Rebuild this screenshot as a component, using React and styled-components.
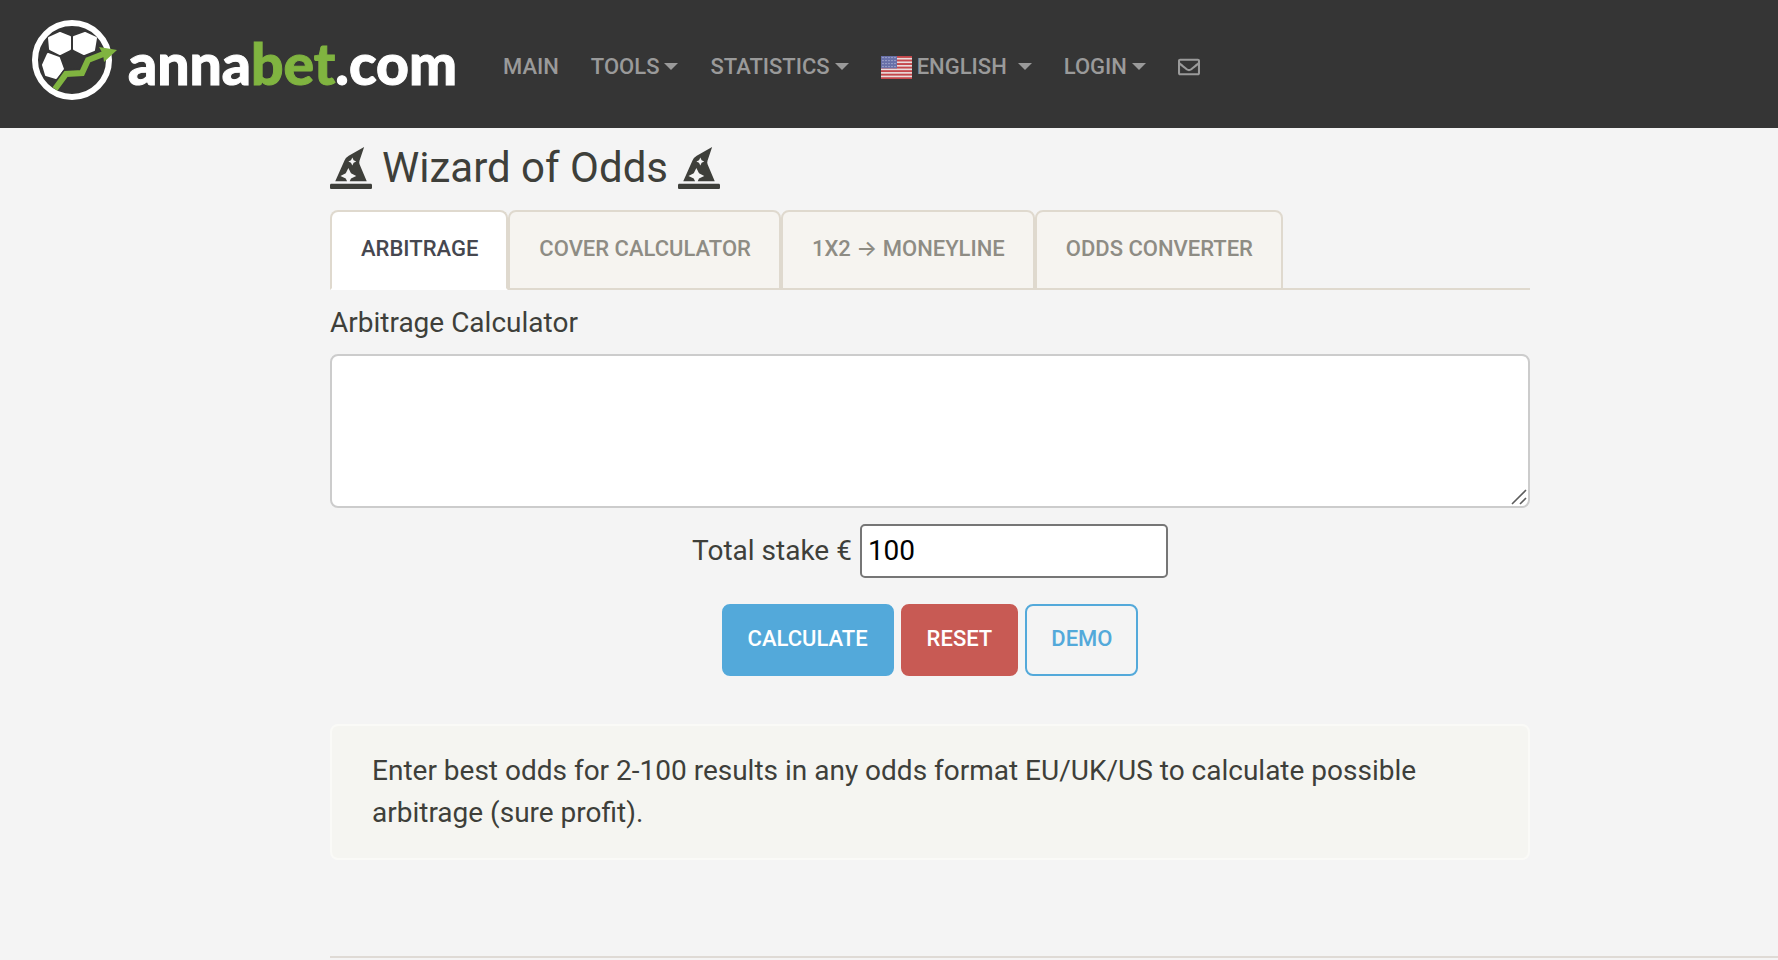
import React from 'react';
import styled, { createGlobalStyle } from 'styled-components';
import { FaHatWizard, FaRegEnvelope } from 'react-icons/fa';

const GlobalStyle = createGlobalStyle`
  * {
    box-sizing: border-box;
  }
  body {
    margin: 0;
    background: #f4f4f4;
    color: #3e3f3a;
    font-family: Roboto, Inter, sans-serif;
    font-size: 28px;
    line-height: 42px;
  }
`;

const Navbar = styled.header`
  display: flex;
  align-items: flex-start;
  gap: 46px;
  height: 128px;
  padding: 18px 32px;
  background: #353535;
`;
const Brand = styled.a`
  display: flex;
  gap: 10px;
  text-decoration: none;
`;
const BrandName = styled.span`
  padding-top: 13px;
  color: #fff;
  font-family: Lato, sans-serif;
  font-size: 57px;
  font-weight: 900;
  line-height: 64px;
  -webkit-text-stroke: 1px;
`;
const Green = styled.span`
  color: #80b440;
`;
const Nav = styled.nav`
  display: flex;
  align-items: center;
  gap: 32px;
  padding-top: 33px;
`;
const NavLink = styled.a`
  display: flex;
  align-items: center;
  gap: 5px;
  color: #9a9a9a;
  font-size: 22px;
  font-weight: 500;
  line-height: 32px;
  text-decoration: none;
  text-transform: uppercase;
`;
const Caret = styled.span`
  margin: 0 0 2px ${(props) => (props.$spaced ? "6px" : "0")};
  border-top: 7px solid;
  border-right: 7px solid transparent;
  border-left: 7px solid transparent;
`;

const Page = styled.div`
  padding: 13px 0 0 330px;
`;
const Content = styled.main`
  max-width: 1200px;
`;
const Title = styled.h1`
  display: flex;
  align-items: center;
  gap: 10px;
  margin: 0 0 15px;
  font-size: 42px;
  font-weight: 400;
  line-height: 54px;
`;
const Tabs = styled.div`
  display: flex;
  border-bottom: 2px solid #dfd9ce;
`;
const Tab = styled.button`
  height: 80px;
  margin-bottom: -2px;
  padding: 0 28px 4px 29px;
  border: 2px solid #dfd9ce;
  border-bottom-color: ${(props) => (props.$active ? "#fff" : "#dfd9ce")};
  border-radius: 8px 8px 0 0;
  background: ${(props) => (props.$active ? "#fff" : "#f6f4f0")};
  color: ${(props) => (props.$active ? "#46474f" : "#8e8c84")};
  font-family: inherit;
  font-size: 22px;
  font-weight: 500;
  text-transform: uppercase;
  cursor: pointer;
`;
const FieldLabel = styled.label`
  display: block;
  margin: 12px 0 10px;
`;
const OddsBox = styled.div`
  position: relative;
`;
const OddsInput = styled.textarea`
  display: block;
  width: 100%;
  height: 154px;
  padding: 12px 24px;
  border: 2px solid #ccc;
  border-radius: 8px;
  background: #fff;
  font: inherit;
  resize: vertical;

  &::-webkit-resizer {
    background: transparent;
  }
`;
const Grip = styled.svg`
  position: absolute;
  right: 3px;
  bottom: 3px;
  pointer-events: none;
`;
const Row = styled.div`
  display: flex;
  justify-content: center;
  align-items: center;
  gap: ${(props) => props.$gap};
  margin-top: ${(props) => props.$top};
`;
const StakeInput = styled.input`
  width: 308px;
  height: 54px;
  padding: 0 6px 2px;
  border: 2px solid #767676;
  border-radius: 5px;
  background: #fff;
  color: #000;
  font: inherit;
`;
const Button = styled.button`
  height: 72px;
  padding: 0 24px 4px;
  border: 2px solid ${(props) => props.$color};
  border-radius: 8px;
  background: ${(props) => (props.$outline ? "transparent" : props.$color)};
  color: ${(props) => (props.$outline ? props.$color : "#fff")};
  font-family: inherit;
  font-size: 22px;
  font-weight: 500;
  text-transform: uppercase;
  cursor: pointer;
`;
const Well = styled.p`
  margin: 48px 0 96px;
  padding: 24px 40px;
  border: 2px solid #fafaf7;
  border-radius: 8px;
  background: #f5f5f1;
`;
const Divider = styled.hr`
  margin: 0;
  border: 0;
  border-top: 2px solid #dfdad5;
`;

const Ball = () => (
    <svg width="86" height="84" viewBox="0 0 86 84" aria-hidden="true">
        <circle cx="40" cy="42" r="37" fill="none" stroke="#fff" strokeWidth="6" />
        <g fill="#fff" stroke="#fff" strokeWidth="2" strokeLinejoin="round">
            <path d="M28 15 L38 19 L38 31 L28 36 L18 31 L17 20 Z" />
            <path d="M53 15 L42 19 L42 31 L52 36 L62 32 L64 20 Z" />
            <path d="M16 36 L27 40 L31 51 L24 60 L14 57 L11 47 Z" />
        </g>
        <path d="M28 65 L34 56 L51 54 L56 42 L66 38" fill="none" stroke="#353535" strokeWidth="9" />
        <path d="M23 71 L34 56 L50 55 L56 42 L74 35" fill="none" stroke="#80b440" strokeWidth="6" />
        <path d="M67 29 L85 32 L72 44 L71 36 Z" fill="#80b440" />
    </svg>
);

const Flag = () => (
    <svg width="31" height="23" viewBox="0 0 31 23" aria-hidden="true">
        <rect width="31" height="23" fill="#e9dcdc" />
        {[0, 1, 2, 3, 4, 5, 6].map((i) => (
            <rect key={i} y={i * 3.54} width="31" height="1.9" fill="#c4474b" />
        ))}
        <rect width="16" height="12.4" fill="#6870a8" />
        {[2, 5, 8, 11].map((y) =>
            [2, 5, 8, 11, 14].map((x) => <circle key={x + "-" + y} cx={x} cy={y - 0.4} r="0.6" fill="#c8cce4" />)
        )}
    </svg>
);

const TABS = ["Arbitrage", "Cover calculator", "1X2 → Moneyline", "Odds converter"];

const App = () => {

    const [tab, setTab] = React.useState(TABS[0]);
    const [odds, setOdds] = React.useState("");
    const [stake, setStake] = React.useState("100");

    const reset = () => {
        setOdds("");
        setStake("100");
    }

    return (
        <>
            <GlobalStyle />
            <Navbar>
                <Brand href="#">
                    <Ball />
                    <BrandName>anna<Green>bet</Green>.com</BrandName>
                </Brand>
                <Nav>
                    <NavLink href="#">Main</NavLink>
                    <NavLink href="#">Tools<Caret /></NavLink>
                    <NavLink href="#">Statistics<Caret /></NavLink>
                    <NavLink href="#"><Flag />English<Caret $spaced /></NavLink>
                    <NavLink href="#">Login<Caret /></NavLink>
                    <NavLink href="#" aria-label="Contact"><FaRegEnvelope size={22} /></NavLink>
                </Nav>
            </Navbar>
            <Page>
                <Content>
                    <Title><FaHatWizard size={42} />Wizard of Odds<FaHatWizard size={42} /></Title>
                    <Tabs role="tablist">
                        {TABS.map((name) => (
                            <Tab key={name} type="button" role="tab" aria-selected={tab === name} $active={tab === name} onClick={() => setTab(name)}>
                                {name}
                            </Tab>
                        ))}
                    </Tabs>
                    <FieldLabel htmlFor="odds">Arbitrage Calculator</FieldLabel>
                    <OddsBox>
                        <OddsInput id="odds" value={odds} onChange={e => setOdds(e.target.value)} />
                        <Grip width="16" height="16" viewBox="0 0 16 16" aria-hidden="true">
                            <path d="M1 15 L15 1 M9 15 L15 9" stroke="#5c5c5c" strokeWidth="1.6" />
                        </Grip>
                    </OddsBox>
                    <Row $top="16px" $gap="8px">
                        <label htmlFor="stake">Total stake €</label>
                        <StakeInput id="stake" type="text" value={stake} onChange={e => setStake(e.target.value)} />
                    </Row>
                    <Row $top="26px" $gap="7px">
                        <Button type="button" $color="#53a9da">Calculate</Button>
                        <Button type="button" $color="#c85a54" onClick={reset}>Reset</Button>
                        <Button type="button" $color="#53a9da" $outline onClick={() => setOdds("2.10 2.05")}>Demo</Button>
                    </Row>
                    <Well>
                        Enter best odds for 2-100 results in any odds format EU/UK/US to calculate possible arbitrage (sure profit).
                    </Well>
                </Content>
                <Divider />
            </Page>
        </>
    )
};

export default App;
